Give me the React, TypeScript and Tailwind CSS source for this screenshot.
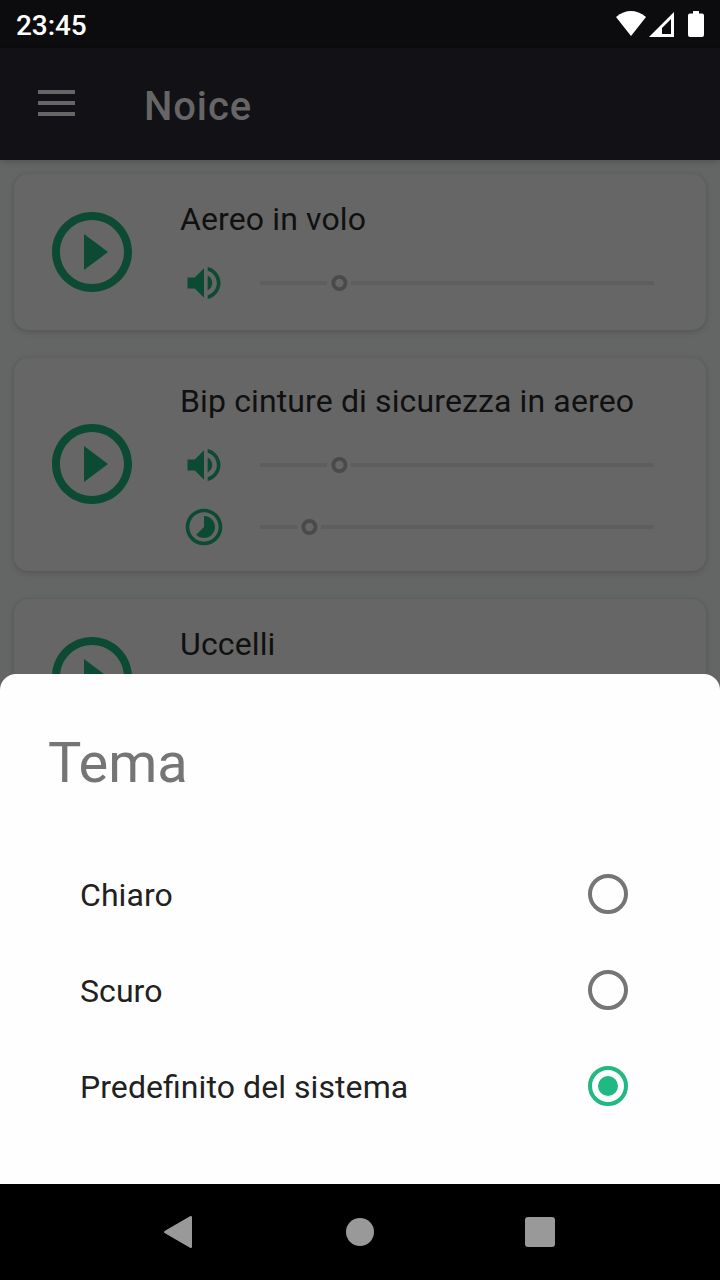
import React from "react";

function VolumeIcon() {
  return (
    <svg viewBox="0 0 24 24" className="size-11 shrink-0 fill-[#0c4a33]">
      <path d="M3 9v6h4l5 5V4L7 9H3zm13.5 3c0-1.77-1.02-3.29-2.5-4.03v8.05c1.48-.73 2.5-2.25 2.5-4.02zM14 3.23v2.06c2.89.86 5 3.54 5 6.71s-2.11 5.85-5 6.71v2.06c4.01-.91 7-4.49 7-8.77s-2.99-7.86-7-8.77z" />
    </svg>
  );
}

function TimelapseIcon() {
  return (
    <svg viewBox="0 0 24 24" className="size-11 shrink-0 fill-[#0c4a33]">
      <path d="M16.24 7.76C15.07 6.59 13.54 6 12 6v6l-4.24 4.24c2.34 2.34 6.14 2.34 8.49 0 2.34-2.34 2.34-6.14-.01-8.48zM12 2C6.48 2 2 6.48 2 12s4.48 10 10 10 10-4.48 10-10S17.52 2 12 2zm0 18c-4.42 0-8-3.58-8-8s3.58-8 8-8 8 3.58 8 8-3.58 8-8 8z" />
    </svg>
  );
}

function PlayButton() {
  return (
    <button className="flex size-24 shrink-0">
      <svg viewBox="0 0 24 24" className="size-24 fill-[#0c4a33]">
        <path d="M10 16.5l6-4.5-6-4.5v9zM12 2C6.48 2 2 6.48 2 12s4.48 10 10 10 10-4.48 10-10S17.52 2 12 2zm0 18c-4.41 0-8-3.59-8-8s3.59-8 8-8 8 3.59 8 8-3.59 8-8 8z" />
      </svg>
    </button>
  );
}

function SliderRow({ icon, before }: { icon: React.ReactNode; before: number }) {
  return (
    <div className="flex h-[62px] items-center pl-0.5">
      {icon}
      <div className="ml-[34px] flex w-[394px] items-center">
        <div className="h-1 bg-[#5e5e5e]" style={{ width: before }} />
        <svg viewBox="0 0 24 24" className="size-6 shrink-0 fill-none stroke-[#4a4a4a]">
          <circle cx="12.4" cy="12" r="6.1" strokeWidth="3.8" />
        </svg>
        <div className="h-1 grow bg-[#5e5e5e]" />
      </div>
    </div>
  );
}

function SoundCard({ name, className, children }: { name: string; className: string; children?: React.ReactNode }) {
  return (
    <section
      className={`flex shrink-0 items-start rounded-[14px] bg-[#666666] pl-[30px] shadow-[0_2px_6px_rgba(0,0,0,0.15),0_0_3px_rgba(0,0,0,0.06)] ${className}`}
    >
      <div className="flex h-full items-center">
        <PlayButton />
      </div>
      <div className="ml-10 flex flex-col gap-[13px]">
        <h2 className="text-[32px] leading-10 tracking-[0.125px] whitespace-nowrap text-[#101010]">{name}</h2>
        <div className="flex flex-col">{children}</div>
      </div>
    </section>
  );
}

function ThemeOption({ label, selected = false }: { label: string; selected?: boolean }) {
  return (
    <label className="flex h-24 items-center justify-between pr-[92px] pl-20">
      <span className="pt-0.5 text-[32px] leading-10 tracking-[0.07px] text-[#212121] [font-feature-settings:'liga'_1]">
        {label}
      </span>
      <span
        className={`flex size-10 items-center justify-center rounded-full border-4 ${
          selected ? "border-[#1fb981]" : "border-[#757575]"
        }`}
      >
        {selected && <span className="size-5 rounded-full bg-[#1fb981]" />}
      </span>
    </label>
  );
}

export default function App() {
  return (
    <div className="flex h-[1280px] w-[720px] flex-col overflow-hidden bg-[#636664] font-['Roboto',sans-serif]">
      <div className="flex h-12 shrink-0 items-center justify-between bg-[#0c0c0e] pr-4 pl-4 text-white">
        <span className="pt-1 text-[28px] leading-8 font-medium tracking-[-0.1px]">23:45</span>
        <svg viewBox="0 0 90 28" className="h-7 w-[90px] fill-white">
          <path d="M2 7Q16.900-4.800 32 7L17 26Z" />
          <path fillRule="evenodd" d="M60 2V27H35ZM57 9L48 18V24H57Z" />
          <path d="M74 3.500H79V1H85V3.500H88Q90 3.500 90 5.500V25Q90 27 88 27H76Q74 27 74 25V5.500Q74 3.500 76 3.500Z" />
        </svg>
      </div>

      <header className="relative flex h-28 shrink-0 items-center bg-[#121115] pl-[37.5px] shadow-[0_2px_6px_rgba(0,0,0,0.16)]">
        <button className="mb-0.5 flex w-[37px] flex-col gap-[7px]">
          <span className="h-1 bg-[#666666]" />
          <span className="h-1 bg-[#666666]" />
          <span className="h-1 bg-[#666666]" />
        </button>
        <h1 className="mt-1.5 ml-[69.5px] text-[40px] leading-12 font-medium tracking-[0.9px] text-[#666666]">Noice</h1>
      </header>

      <main className="flex h-[514px] shrink-0 flex-col gap-7 overflow-hidden px-3.5 pt-3.5">
        <SoundCard name="Aereo in volo" className="h-[156px] pt-[25px] *:first:-mt-[25px] *:first:h-[156px]">
          <SliderRow icon={<VolumeIcon />} before={67} />
        </SoundCard>
        <SoundCard
          name="Bip cinture di sicurezza in aereo"
          className="h-[213px] pt-[23px] *:first:-mt-[23px] *:first:h-[212px]"
        >
          <SliderRow icon={<VolumeIcon />} before={67} />
          <SliderRow icon={<TimelapseIcon />} before={37} />
        </SoundCard>
        <SoundCard name="Uccelli" className="h-[156px] pt-[25px] *:first:-mt-[25px] *:first:h-[156px]">
          <SliderRow icon={<VolumeIcon />} before={67} />
        </SoundCard>
      </main>

      <div className="flex h-[510px] shrink-0 flex-col rounded-t-[16px] bg-[#fefefe]">
        <h2 className="mt-14 mb-[50px] pl-12 text-[56px] leading-[66px] tracking-[-0.1px] text-[#757575]">Tema</h2>
        <ThemeOption label="Chiaro" />
        <ThemeOption label="Scuro" />
        <ThemeOption label="Predefinito del sistema" selected />
      </div>

      <nav className="flex h-24 shrink-0 items-center justify-center gap-[148px] bg-black">
        <svg viewBox="0 0 32 32" className="size-8 fill-[#999999]">
          <path d="M1 14.700 26 .300Q28-.700 28 1.500V30.500Q28 32.700 26 31.700L1 17.300Q-1 16 1 14.700Z" />
        </svg>
        <svg viewBox="0 0 32 32" className="size-8 fill-[#999999]">
          <circle cx="16" cy="16" r="14" />
        </svg>
        <svg viewBox="0 0 32 32" className="size-8 fill-[#999999]">
          <rect x="1" y="1" width="30" height="30" rx="3" />
        </svg>
      </nav>
    </div>
  );
}
